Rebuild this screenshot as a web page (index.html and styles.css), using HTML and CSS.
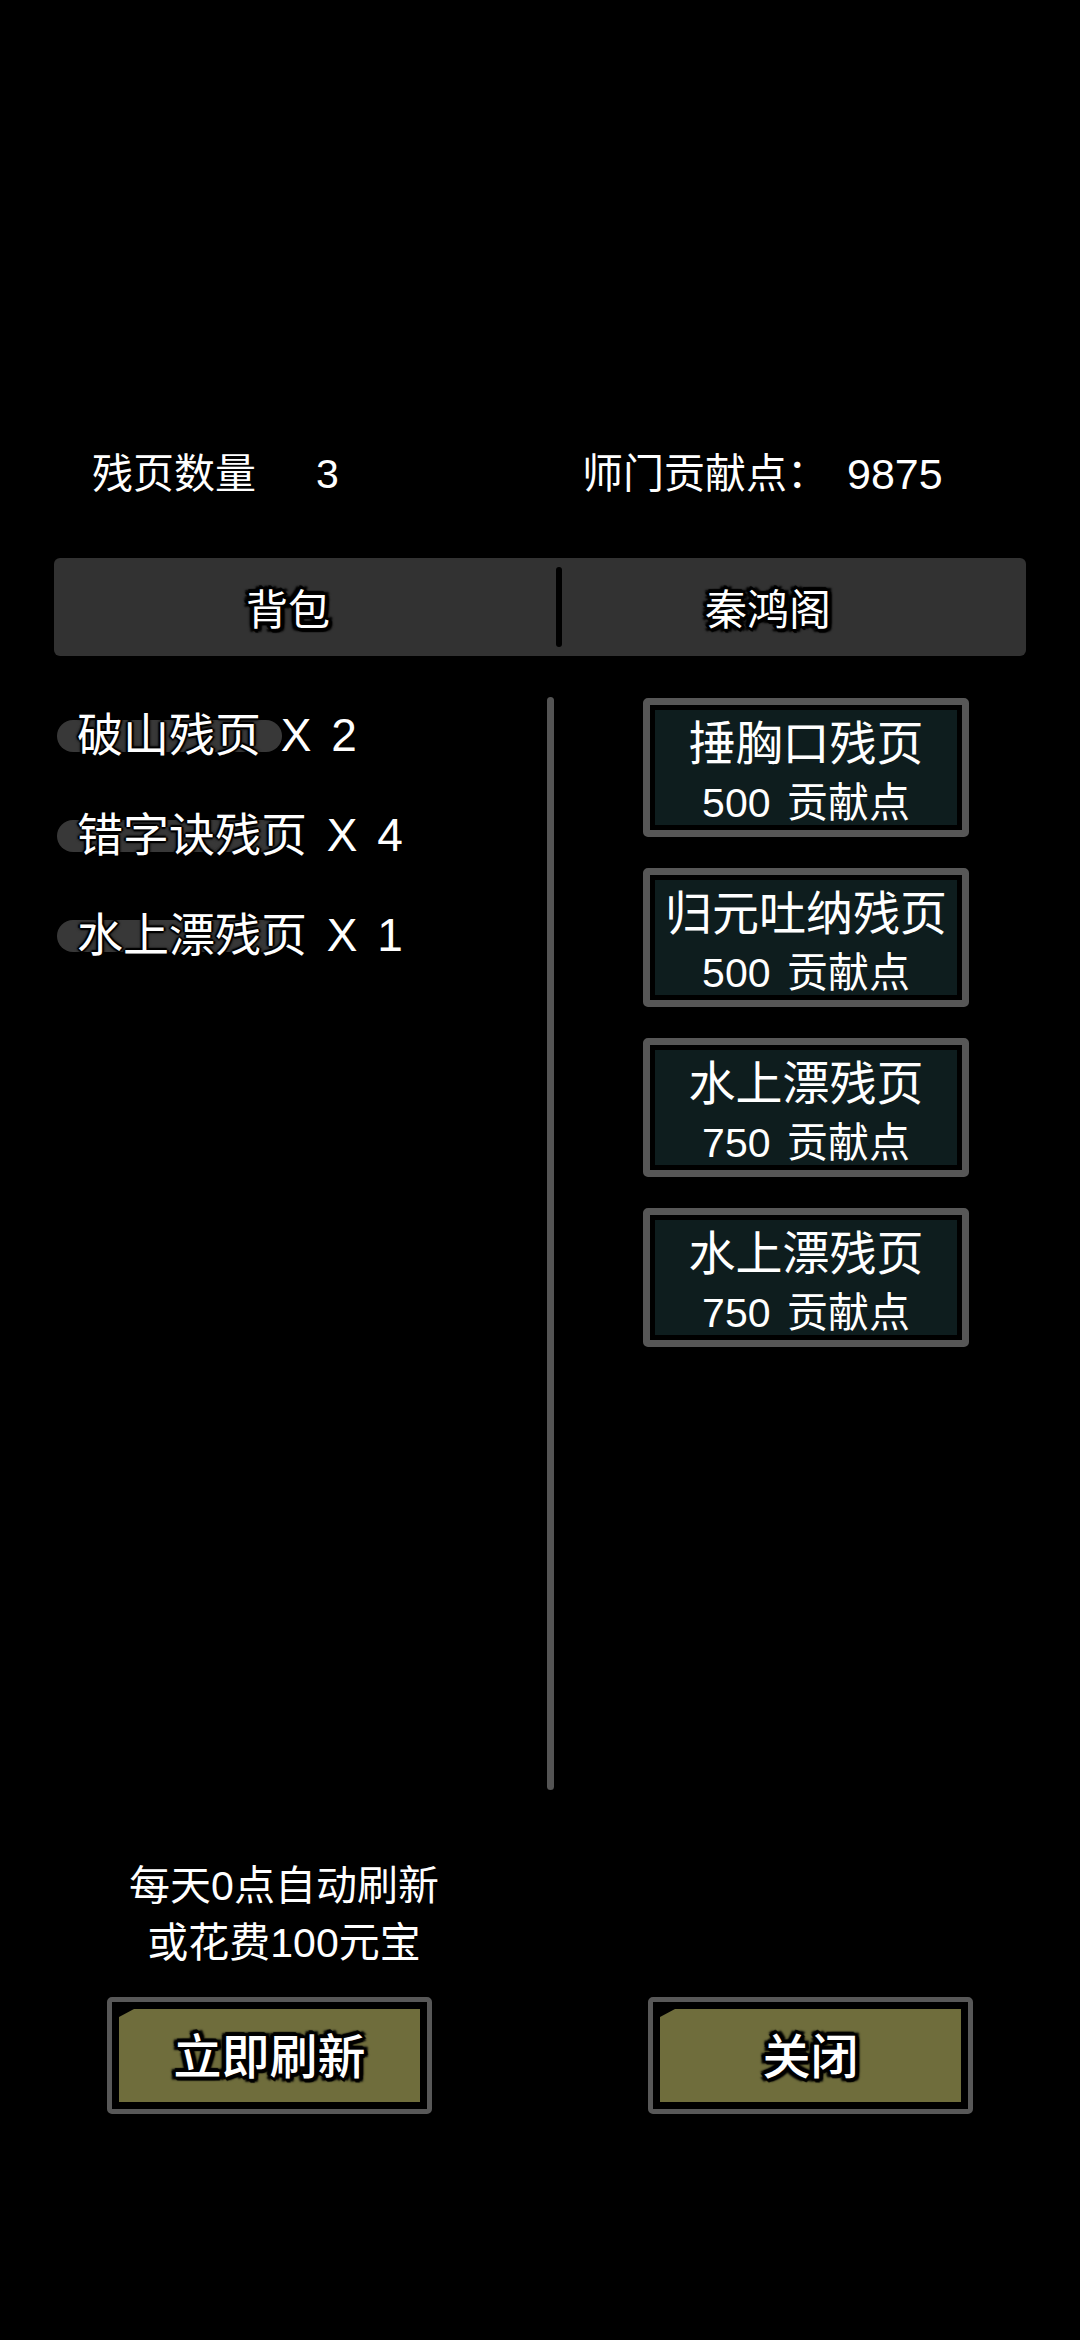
FILE: index.html
```html
<!DOCTYPE html>
<html lang="zh-CN">
<head>
<meta charset="utf-8">
<link rel="stylesheet" href="styles.css">
</head>
<body>
<div class="page">
  <div class="header">
    <span class="h-label1">残页数量</span>
    <span class="h-val1">3</span>
    <span class="h-label2">师门贡献点：</span>
    <span class="h-val2">9875</span>
  </div>

  <div class="tabs">
    <div class="tab tab-left"><span class="outline">背包</span></div>
    <div class="tab-divider"></div>
    <div class="tab tab-right"><span class="outline">秦鸿阁</span></div>
  </div>

  <div class="content">
    <div class="bag">
      <div class="item"><span class="item-text">破山残页 X 2</span></div>
      <div class="item"><span class="item-text">错字诀残页 X 4</span></div>
      <div class="item"><span class="item-text">水上漂残页 X 1</span></div>
    </div>
    <div class="scrollbar"></div>
    <div class="shop">
      <div class="card"><div class="card-inner"><div class="card-name">捶胸口残页</div><div class="card-price">500 贡献点</div></div></div>
      <div class="card"><div class="card-inner"><div class="card-name">归元吐纳残页</div><div class="card-price">500 贡献点</div></div></div>
      <div class="card"><div class="card-inner"><div class="card-name">水上漂残页</div><div class="card-price">750 贡献点</div></div></div>
      <div class="card"><div class="card-inner"><div class="card-name">水上漂残页</div><div class="card-price">750 贡献点</div></div></div>
    </div>
  </div>

  <div class="note">
    <div>每天0点自动刷新</div>
    <div>或花费100元宝</div>
  </div>

  <div class="buttons">
    <div class="btn btn-refresh"><div class="btn-inner"><span class="outline btn-text">立即刷新</span></div></div>
    <div class="btn btn-close"><div class="btn-inner"><span class="outline btn-text">关闭</span></div></div>
  </div>
</div>
</body>
</html>
```

FILE: styles.css
```css
* { box-sizing: border-box; }
html, body {
  margin: 0;
  padding: 0;
  background: #000;
}
body {
  width: 1080px;
  height: 2340px;
  overflow: hidden;
  color: #fff;
  font-family: "Liberation Sans", "Noto Sans CJK SC", sans-serif;
}
.page {
  padding-top: 444px;
}

/* header */
.header {
  display: flex;
  align-items: center;
  height: 60px;
  padding-left: 92px;
  font-size: 41px;
  line-height: 60px;
  white-space: nowrap;
}
.h-label1 { width: 224px; }
.h-val1 { width: 266px; }
.h-label2 { width: 265px; }
.h-val2 { font-size: 43px; }

/* outline text */
.outline {
  text-shadow:
    0 0 2px #000,
    3px 0 0 #000, -3px 0 0 #000, 0 3px 0 #000, 0 -3px 0 #000,
    2px 2px 0 #000, -2px -2px 0 #000, 2px -2px 0 #000, -2px 2px 0 #000,
    4px 1px 1px #000, -4px -1px 1px #000, 1px 4px 1px #000, -1px -4px 1px #000,
    4px 3px 2px #000, -4px 3px 2px #000, 4px -3px 2px #000, -4px -3px 2px #000;
}

/* tabs */
.tabs {
  display: flex;
  margin: 54px 54px 0 54px;
  height: 98px;
  background: #323232;
  border-radius: 6px;
}
.tab {
  display: flex;
  align-items: center;
  justify-content: center;
  font-size: 42px;
  line-height: 60px;
  padding-top: 8px;
}
.tab-left {
  width: 502px;
  padding-right: 34px;
}
.tab-right {
  flex: 1;
  padding-right: 52px;
}
.tab-divider {
  width: 6px;
  margin: 9px 0;
  background: #000;
  border-radius: 3px;
}

/* content */
.content {
  display: flex;
  margin-top: 29px;
  height: 1106px;
}
.bag {
  width: 547px;
  padding-left: 57px;
}
.item {
  position: relative;
  height: 100px;
  line-height: 100px;
  font-size: 46px;
  white-space: nowrap;
}
.item::before {
  content: "";
  position: absolute;
  left: 0;
  top: 35px;
  width: 225px;
  height: 32px;
  border-radius: 16px;
  background: #383838;
}
.item-text {
  position: relative;
  padding-left: 20px;
  word-spacing: 7px;
  text-shadow:
    0 0 3px #000, 0 0 3px #000, 0 0 4px #000,
    2px 0 1px #000, -2px 0 1px #000, 0 2px 1px #000, 0 -2px 1px #000;
}
.scrollbar {
  width: 7px;
  margin-top: 12px;
  height: 1093px;
  background: #545454;
  border-radius: 4px;
}
.shop {
  flex: 1;
  padding-left: 89px;
  padding-top: 13px;
  display: flex;
  flex-direction: column;
  gap: 31px;
}
.card {
  width: 326px;
  height: 139px;
  border: 7px solid #575757;
  border-radius: 5px;
  background: #000;
  padding: 5px;
}
.card-inner {
  height: 115px;
  background: #0e1d1e;
  padding-top: 4px;
  text-align: center;
  white-space: nowrap;
}
.card-name {
  font-size: 47px;
  line-height: 60px;
}
.card-price {
  font-size: 41px;
  line-height: 58px;
  word-spacing: 5px;
}

/* note */
.note {
  margin-top: 67px;
  width: 568px;
  text-align: center;
  font-size: 41px;
  line-height: 57px;
}

/* buttons */
.buttons {
  display: flex;
  margin-top: 25px;
  padding-left: 107px;
  gap: 216px;
}
.btn {
  width: 325px;
  height: 117px;
  border: 5px solid #585858;
  border-radius: 5px;
  background: #000;
  padding: 7px;
}
.btn-inner {
  height: 100%;
  background: #6f6d3c;
  clip-path: polygon(15px 0, 100% 0, 100% 100%, 0 100%, 0 8px);
  display: flex;
  align-items: center;
  justify-content: center;
  padding-top: 4px;
}
.btn-text {
  font-size: 48px;
  line-height: 60px;
  font-weight: 500;
}
```
